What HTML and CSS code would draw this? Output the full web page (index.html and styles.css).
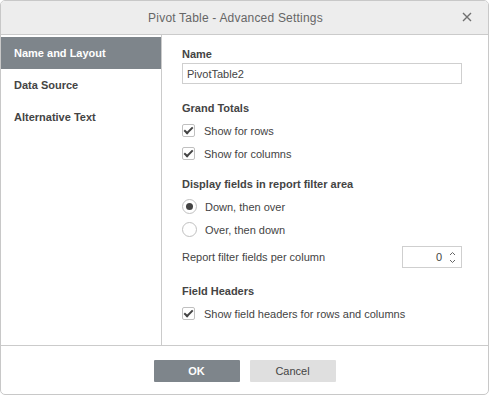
FILE: index.html
```html
<!DOCTYPE html>
<html lang="en">
<head>
  <meta charset="UTF-8">
  <title>Pivot Table - Advanced Settings</title>
  <link rel="stylesheet" href="styles.css">
</head>
<body>
<div class="dialog">
  <div class="header">
    <span class="title">Pivot Table - Advanced Settings</span>
    <span class="close">
      <svg width="10" height="10" viewBox="0 0 10 10"><path d="M1 1L9 9M9 1L1 9" stroke="#707070" stroke-width="1.4"/></svg>
    </span>
  </div>

  <div class="main">
    <div class="sidebar">
      <div class="tab active">Name and Layout</div>
      <div class="tab">Data Source</div>
      <div class="tab">Alternative Text</div>
    </div>

    <div class="content">
      <div class="label first">Name</div>
      <input type="text" class="name-input" value="PivotTable2">

      <div class="label section">Grand Totals</div>
      <div class="row first-row"><span class="check"></span>Show for rows</div>
      <div class="row"><span class="check"></span>Show for columns</div>

      <div class="label section2">Display fields in report filter area</div>
      <div class="row first-row"><span class="radio on"></span>Down, then over</div>
      <div class="row"><span class="radio"></span>Over, then down</div>

      <div class="spin-row">
        <span>Report filter fields per column</span>
        <div class="spinner">
          <span class="spin-val">0</span>
          <span class="arrows">
            <svg width="7" height="5" viewBox="0 0 7 5"><path d="M1 4L3.5 1.5L6 4" fill="none" stroke="#666" stroke-width="1"/></svg>
            <svg width="7" height="5" viewBox="0 0 7 5"><path d="M1 1L3.5 3.5L6 1" fill="none" stroke="#666" stroke-width="1"/></svg>
          </span>
        </div>
      </div>

      <div class="label section3">Field Headers</div>
      <div class="row first-row"><span class="check"></span>Show field headers for rows and columns</div>
    </div>
  </div>

  <div class="footer">
    <button class="btn primary">OK</button>
    <button class="btn">Cancel</button>
  </div>
</div>
</body>
</html>
```

FILE: styles.css
```css
body {
  margin: 0;
  font-family: "Liberation Sans", Arial, sans-serif;
  font-size: 11px;
  color: #444;
}
.dialog {
  width: 489px;
  height: 395px;
  box-sizing: border-box;
  border: 1px solid #c8c8c8;
  border-radius: 5px;
  overflow: hidden;
  display: flex;
  flex-direction: column;
  background: #fff;
}
.header {
  height: 33px;
  flex: none;
  background: #ededed;
  border-bottom: 1px solid #cbcbcb;
  display: flex;
  align-items: center;
  justify-content: center;
  position: relative;
}
.title {
  font-size: 12px;
  color: #666;
  margin-right: 18px;
  letter-spacing: 0.2px;
}
.close {
  position: absolute;
  right: 16px;
  top: 11px;
  line-height: 0;
}
.main {
  height: 310px;
  flex: none;
  display: flex;
  border-bottom: 1px solid #cbcbcb;
}
.sidebar {
  width: 160px;
  flex: none;
  border-right: 1px solid #cbcbcb;
  padding-top: 2px;
}
.tab {
  height: 32px;
  line-height: 32px;
  padding-left: 13px;
  font-weight: bold;
  color: #444;
}
.tab.active {
  background: #7e858b;
  color: #fff;
}
.content {
  flex: 1;
  padding-left: 20px;
  padding-right: 26px;
}
.label {
  font-weight: bold;
  height: 16px;
  line-height: 16px;
}
.label.first { margin-top: 11px; }
.label.section { margin-top: 16px; }
.label.section2 { margin-top: 11px; }
.label.section3 { margin-top: 15px; }
.name-input {
  display: block;
  width: 100%;
  box-sizing: border-box;
  height: 21px;
  margin-top: 1px;
  border: 1px solid #cfcfcf;
  padding: 0 4px;
  font-family: inherit;
  font-size: 11px;
  color: #444;
  outline: none;
}
.row {
  height: 23px;
  display: flex;
  align-items: center;
}
.row.first-row { margin-top: 3px; }
.check {
  width: 11px;
  height: 11px;
  border: 1px solid #c0c0c0;
  border-radius: 2px;
  margin-right: 9px;
  position: relative;
}
.check::after {
  content: "";
  position: absolute;
  left: 3px;
  top: 0px;
  width: 3px;
  height: 7px;
  border-right: 2px solid #444;
  border-bottom: 2px solid #444;
  transform: rotate(45deg);
}
.radio {
  width: 13px;
  height: 13px;
  border: 1px solid #c0c0c0;
  border-radius: 50%;
  margin-right: 8px;
  position: relative;
}
.radio.on::after {
  content: "";
  position: absolute;
  left: 3px;
  top: 3px;
  width: 7px;
  height: 7px;
  border-radius: 50%;
  background: #444;
}
.spin-row {
  margin-top: 5px;
  height: 22px;
  display: flex;
  align-items: center;
  justify-content: space-between;
}
.spinner {
  width: 60px;
  height: 22px;
  box-sizing: border-box;
  border: 1px solid #cfcfcf;
  display: flex;
  align-items: center;
  justify-content: flex-end;
  padding-right: 5px;
}
.spin-val {
  margin-right: 7px;
}
.arrows {
  display: flex;
  flex-direction: column;
  gap: 3px;
  line-height: 0;
}
.footer {
  flex: 1;
  display: flex;
  justify-content: center;
  gap: 10px;
  padding-top: 14px;
}
.btn {
  width: 86px;
  height: 22px;
  border: none;
  border-radius: 1px;
  background: #dfdfdf;
  color: #444;
  font-family: inherit;
  font-size: 11px;
  padding: 0;
}
.btn.primary {
  background: #7e858b;
  color: #fff;
  font-weight: bold;
}
```
